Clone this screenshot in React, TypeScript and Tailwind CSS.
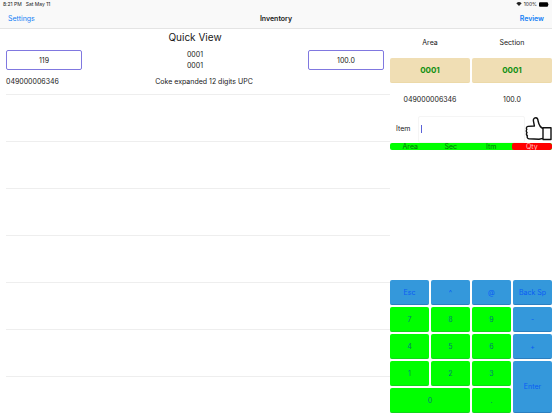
import { useState } from "react";

const emptyRows = [0, 1, 2, 3, 4, 5];

const blueKey = "rounded-xs border-b border-[#2b7fc0] bg-[#3498db] pt-px text-[#0a5cf5]";
const greenKey = "rounded-xs border-b border-[#10d818] bg-[#00ff00] pt-px text-[#007a7a]";

const keys = [
  { label: "Esc", style: blueKey },
  { label: "^", style: blueKey },
  { label: "@", style: blueKey },
  { label: "Back Sp", style: blueKey },
  { label: "7", style: greenKey },
  { label: "8", style: greenKey },
  { label: "9", style: greenKey },
  { label: "-", style: blueKey },
  { label: "4", style: greenKey },
  { label: "5", style: greenKey },
  { label: "6", style: greenKey },
  { label: "+", style: blueKey },
  { label: "1", style: greenKey },
  { label: "2", style: greenKey },
  { label: "3", style: greenKey },
  { label: "Enter", style: `row-span-2 ${blueKey}` },
  { label: "0", style: `col-span-2 ${greenKey}` },
  { label: ".", style: greenKey },
];

function StatusBar() {
  return (
    <div className="flex h-2 items-center justify-between px-[3px] text-[5px] leading-[8px]">
      <div className="flex gap-1">
        <span>8:21 PM</span>
        <span>Sat May 11</span>
      </div>
      <div className="flex items-center gap-[2px]">
        <svg viewBox="0 0 12 9" className="h-1 w-[6px]" aria-hidden="true">
          <path d="M0 3a8.5 8.5 0 0 1 12 0L6 9z" fill="#222" />
        </svg>
        <span>100%</span>
        <svg viewBox="0 0 20 9" className="h-[5px] w-[10px]" aria-hidden="true">
          <rect width="18" height="9" rx="2" fill="#000" />
          <rect x="18.8" y="3" width="1.2" height="3" fill="#555" />
        </svg>
      </div>
    </div>
  );
}

function Header() {
  return (
    <header className="h-[29px] border-b border-[#e4e4e4] bg-[#f9f9f9]">
      <StatusBar />
      <nav className="grid h-5 grid-cols-3 items-center px-2 pt-px">
        <a href="#settings" className="justify-self-start text-[#1480f5]">Settings</a>
        <h1 className="justify-self-center font-semibold">Inventory</h1>
        <a href="#review" className="justify-self-end font-semibold text-[#1480f5]">Review</a>
      </nav>
    </header>
  );
}

function QuickView() {
  const box =
    "h-5 w-[76px] rounded-xs border border-[#8078e0] bg-white text-center outline-none";
  return (
    <section className="pl-[6px]">
      <div className="h-[66px] border-b border-[#eeeeee]">
        <h2 className="pr-[6px] text-center text-[10px] leading-[16px]">Quick View</h2>
        <div className="flex items-center justify-between pt-[4px] pr-[6px]">
          <input aria-label="Record" defaultValue="119" className={box} />
          <div className="text-center leading-[11px]">
            <p>0001</p>
            <p>0001</p>
          </div>
          <input aria-label="Quantity" defaultValue="100.0" className={box} />
        </div>
        <div className="grid grid-cols-[1fr_auto_1fr] pt-1 pr-1 leading-[14px]">
          <span>049000006346</span>
          <span className="pl-4">Coke expanded 12 digits UPC</span>
        </div>
      </div>
      {emptyRows.map((row) => (
        <div key={row} className="h-[47px] border-b border-[#eeeeee]" />
      ))}
    </section>
  );
}

function ThumbButton() {
  return (
    <button type="button" aria-label="Accept" className="h-6 w-[27px] shrink-0">
      <svg viewBox="0 0 27 24" fill="none" stroke="#111" strokeWidth="1.4" strokeLinejoin="round" className="h-6 w-[27px]">
        <path d="M18 11.5 C15.5 10.5 14 8 13.2 4.5 C13 2 12.6 .8 10.8 .8 C8.6 .8 8 2.5 8.6 4.8 L9.4 9 L3 9.4 C1.4 9.6 1 11.4 1.8 12.4 C1 13.4 1.2 15 2 15.6 C1.2 16.8 1.6 18.2 2.4 18.8 C1.8 20.2 2.4 21.6 4 21.8 L14 22.2 L18 21.4" />
        <path d="M18 10.8 H26 V22.5 H18 Z" />
      </svg>
    </button>
  );
}

function EntryPanel() {
  const [item, setItem] = useState("");
  const area =
    "h-[25px] rounded-xs border-b border-[#ecd9a8] bg-[#f0deb4] text-[8px] font-bold text-[#129012]";
  return (
    <section className="flex flex-col">
      <div className="grid grid-cols-2 gap-x-[2px] pt-px text-center">
        <div className="h-7 leading-[26px]">Area</div>
        <div className="h-7 leading-[26px]">Section</div>
        <button type="button" className={area}>0001</button>
        <button type="button" className={area}>0001</button>
        <div className="h-8 leading-[34px]">049000006346</div>
        <div className="h-8 leading-[34px]">100.0</div>
      </div>
      <div className="flex h-7 items-center">
        <label htmlFor="item" className="w-7 shrink-0 pl-[6px]">Item</label>
        <div className="relative h-[27px] min-w-0 flex-1">
          <input
            id="item"
            value={item}
            onChange={(e) => setItem(e.target.value)}
            className="h-full w-full rounded-xs border border-[#f5f5f5] px-[3px] caret-[#4a5fe0] outline-none"
          />
          {item === "" && (
            <span className="pointer-events-none absolute top-[9px] left-[3px] h-2 w-px bg-[#5a62d8]" />
          )}
        </div>
        <ThumbButton />
      </div>
      <div className="grid h-[7px] grid-cols-4 overflow-hidden rounded-xs bg-[#00ff00] leading-[7px] text-[#08700f]">
        <button type="button">Area</button>
        <button type="button">Sec</button>
        <button type="button">Itm</button>
        <button type="button" className="rounded-xs bg-[#ff0000] text-[#ffc4c4]">Qty</button>
      </div>
      <div className="mt-auto grid auto-rows-[25px] grid-cols-4 gap-[2px] pb-px">
        {keys.map((key) => (
          <button key={key.label} type="button" className={key.style}>
            {key.label}
          </button>
        ))}
      </div>
    </section>
  );
}

export default function App() {
  return (
    <div className="flex min-h-screen flex-col bg-white font-['Inter','Liberation_Sans',sans-serif] text-[7px] leading-[10px] text-[#181818]">
      <Header />
      <main className="grid flex-1 grid-cols-[minmax(0,390fr)_minmax(0,162fr)]">
        <QuickView />
        <EntryPanel />
      </main>
    </div>
  );
}
